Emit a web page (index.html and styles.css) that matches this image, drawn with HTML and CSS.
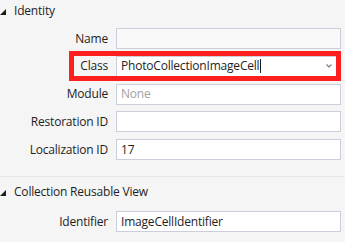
FILE: index.html
```html
<!DOCTYPE html>
<html lang="en">
<head>
    <meta charset="UTF-8">
    <title>Properties - Identity</title>
    <link rel="stylesheet" href="styles.css">
</head>
<body>
    <section class="group group-identity">
        <div class="group-header">
            <svg class="disclosure" width="6" height="6" viewBox="0 0 6 6"><polygon points="6,0 6,6 0,6"/></svg>
            <span>Identity</span>
        </div>
        <div class="fields">
            <div class="field">
                <label>Name</label>
                <div class="input input-readonly"></div>
            </div>
            <div class="field field-marked">
                <label>Class</label>
                <div class="input combo">
                    <span class="value">PhotoCollectionImageCell<span class="caret"></span></span>
                    <svg class="chevron" width="6" height="4" viewBox="0 0 6 4"><polyline points="0.5,0.5 3,3 5.5,0.5"/></svg>
                </div>
            </div>
            <div class="field">
                <label>Module</label>
                <div class="input"><span class="placeholder">None</span></div>
            </div>
            <div class="field">
                <label>Restoration ID</label>
                <div class="input"></div>
            </div>
            <div class="field">
                <label>Localization ID</label>
                <div class="input"><span class="value">17</span></div>
            </div>
        </div>
    </section>

    <div class="divider"></div>

    <section class="group group-reusable">
        <div class="group-header">
            <svg class="disclosure" width="6" height="6" viewBox="0 0 6 6"><polygon points="6,0 6,6 0,6"/></svg>
            <span>Collection Reusable View</span>
        </div>
        <div class="fields">
            <div class="field">
                <label>Identifier</label>
                <div class="input"><span class="value">ImageCellIdentifier</span></div>
            </div>
        </div>
    </section>
</body>
</html>
```

FILE: styles.css
```css
* {
    margin: 0;
    padding: 0;
    box-sizing: border-box;
}

body {
    font-family: "Open Sans", "Noto Sans", sans-serif;
    font-size: 12px;
    line-height: 16px;
    letter-spacing: -0.2px;
    color: #1e1e1e;
    background: #f5f5f5;
    width: 345px;
    height: 242px;
    overflow: hidden;
}

.group-header {
    display: flex;
    align-items: center;
    height: 16px;
}

.group-identity .group-header {
    margin-top: 3px;
}

.group-reusable .group-header {
    margin-top: 7px;
}

.disclosure {
    fill: #1e1e1e;
    margin: 2px 8px 0 0;
}

.fields {
    display: flex;
    flex-direction: column;
    gap: 6.75px;
    padding-right: 4px;
}

.group-identity .fields {
    margin-top: 9px;
}

.group-reusable .fields {
    margin-top: 11px;
}

.field {
    display: grid;
    grid-template-columns: 108px 1fr;
    column-gap: 8px;
    align-items: center;
}

.field label {
    text-align: right;
    white-space: nowrap;
}

.input {
    height: 21px;
    display: flex;
    align-items: center;
    padding: 0 4px;
    background: #fff;
    border: 1px solid #cccedb;
}

.input-readonly {
    background: #f9f9f9;
}

.placeholder {
    color: #a2a2a2;
}

.combo {
    justify-content: space-between;
    padding-right: 8px;
}

.caret {
    display: inline-block;
    width: 1px;
    height: 14px;
    margin-left: 1px;
    vertical-align: -3px;
    background: #1e1e1e;
}

.chevron {
    fill: none;
    stroke: #7a7a7a;
    stroke-width: 1.1;
}

/* red annotation drawn over the Class row */
.field-marked {
    position: relative;
}

.field-marked::after {
    content: "";
    position: absolute;
    left: 69px;
    right: 0;
    top: -5px;
    bottom: -4px;
    border: 5px solid #fe1f1f;
    pointer-events: none;
}

.divider {
    height: 1px;
    margin-top: 16px;
    background: #e7e7e7;
}
```
